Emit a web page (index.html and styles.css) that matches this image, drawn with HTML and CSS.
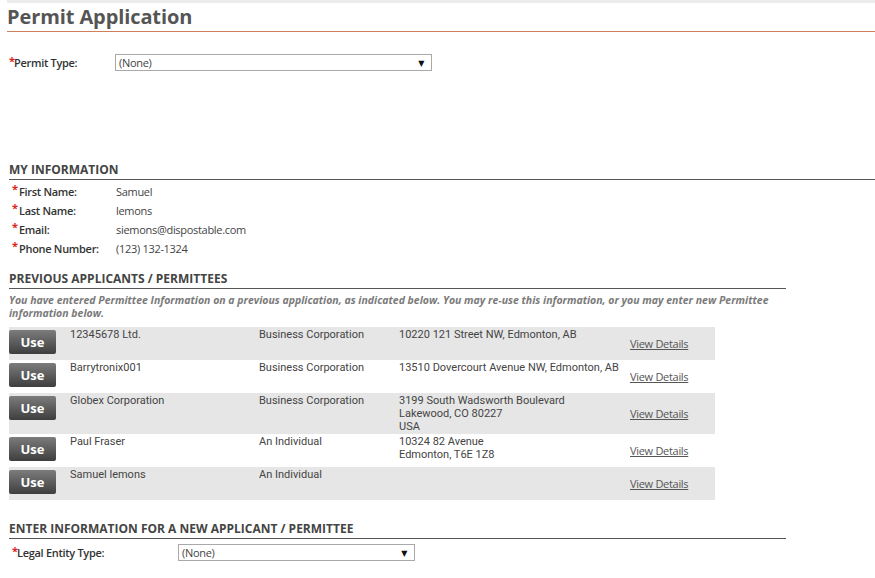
FILE: index.html
```html
<!DOCTYPE html>
<html>
<head>
<meta charset="utf-8">
<link rel="stylesheet" href="styles.css">
</head>
<body>
<div class="page">
  <div class="topbar"></div>
  <h1 class="title">Permit Application</h1>

  <div class="permit-row">
    <span class="req">*</span><span class="label permit-label">Permit Type:</span>
    <div class="select permit-select"><span>(None)</span><span class="arrow">&#9660;</span></div>
  </div>

  <h2 class="section-head full">MY INFORMATION</h2>
  <div class="info">
    <div class="info-row"><span class="req">*</span><span class="label info-label">First Name:</span><span class="value">Samuel</span></div>
    <div class="info-row"><span class="req">*</span><span class="label info-label">Last Name:</span><span class="value">lemons</span></div>
    <div class="info-row"><span class="req">*</span><span class="label info-label">Email:</span><span class="value">siemons@dispostable.com</span></div>
    <div class="info-row"><span class="req">*</span><span class="label info-label">Phone Number:</span><span class="value">(123) 132-1324</span></div>
  </div>

  <h2 class="section-head narrow prev-head">PREVIOUS APPLICANTS / PERMITTEES</h2>
  <p class="note">You have entered Permittee Information on a previous application, as indicated below. You may re-use this information, or you may enter new Permittee information below.</p>

  <div class="apps">
    <div class="app-row shade">
      <div class="c-btn"><button class="use">Use</button></div>
      <div class="c-txt">12345678 Ltd.</div>
      <div class="c-txt">Business Corporation</div>
      <div class="c-txt addr">10220 121 Street NW, Edmonton, AB</div>
      <div class="c-view"><a class="view">View Details</a></div>
    </div>
    <div class="app-row">
      <div class="c-btn"><button class="use">Use</button></div>
      <div class="c-txt">Barrytronix001</div>
      <div class="c-txt">Business Corporation</div>
      <div class="c-txt addr">13510 Dovercourt Avenue NW, Edmonton, AB</div>
      <div class="c-view"><a class="view">View Details</a></div>
    </div>
    <div class="app-row shade">
      <div class="c-btn"><button class="use">Use</button></div>
      <div class="c-txt">Globex Corporation</div>
      <div class="c-txt">Business Corporation</div>
      <div class="c-txt addr"><div class="line">3199 South Wadsworth Boulevard</div><div class="line">Lakewood, CO 80227</div><div class="line">USA</div></div>
      <div class="c-view"><a class="view">View Details</a></div>
    </div>
    <div class="app-row">
      <div class="c-btn"><button class="use">Use</button></div>
      <div class="c-txt">Paul Fraser</div>
      <div class="c-txt">An Individual</div>
      <div class="c-txt addr"><div class="line">10324 82 Avenue</div><div class="line">Edmonton, T6E 1Z8</div></div>
      <div class="c-view"><a class="view">View Details</a></div>
    </div>
    <div class="app-row shade">
      <div class="c-btn"><button class="use">Use</button></div>
      <div class="c-txt">Samuel lemons</div>
      <div class="c-txt">An Individual</div>
      <div class="c-txt addr"></div>
      <div class="c-view"><a class="view">View Details</a></div>
    </div>
  </div>

  <h2 class="section-head narrow new-head">ENTER INFORMATION FOR A NEW APPLICANT / PERMITTEE</h2>
  <div class="legal-row">
    <span class="req">*</span><span class="label legal-label">Legal Entity Type:</span>
    <div class="select legal-select"><span>(None)</span><span class="arrow">&#9660;</span></div>
  </div>
</div>
</body>
</html>
```

FILE: styles.css
```css
html, body {
  margin: 0;
  padding: 0;
  background: #ffffff;
}

body {
  font-family: "Open Sans", "DejaVu Sans", sans-serif;
  font-size: 11px;
  color: #444;
  letter-spacing: -0.3px;
}

.page {
  width: 875px;
}

.topbar {
  margin-left: 7px;
  height: 3px;
  background: #ececec;
}

.title {
  margin: 0 0 0 7px;
  font-size: 20px;
  font-weight: 700;
  line-height: 27px;
  padding-bottom: 1px;
  color: #555;
  border-bottom: 1px solid #cf7f5c;
  letter-spacing: -0.1px;
}

.req {
  color: #d22;
  font-size: 11px;
  font-weight: 700;
  line-height: 1;
  align-self: flex-start;
  margin-top: 1px;
  letter-spacing: 0;
}

.label {
  font-weight: 600;
  color: #333;
}

.permit-row {
  display: flex;
  align-items: center;
  margin: 22px 0 0 9px;
  height: 17px;
}

.permit-label {
  margin-left: -1px;
  width: 101px;
}

.select {
  box-sizing: border-box;
  height: 17px;
  border: 1px solid #a9a9a9;
  display: flex;
  align-items: center;
  justify-content: space-between;
  padding: 0 7px 0 3px;
  color: #444;
  font-size: 11px;
}

.arrow {
  font-size: 8px;
  color: #111;
}

.permit-select {
  width: 317px;
}

.section-head {
  margin: 0 0 0 9px;
  font-size: 12px;
  font-weight: 700;
  line-height: 16px;
  color: #444;
  border-bottom: 1px solid #555;
  padding-bottom: 1px;
  letter-spacing: 0;
}

.section-head.full {
  margin-top: 91px;
}

.section-head.narrow {
  width: 777px;
}

.info {
  margin: 2px 0 0 12px;
}

.info-row {
  display: flex;
  align-items: center;
  height: 19px;
}

.info-label {
  margin-left: 1px;
  width: 97px;
}

.value {
  color: #444;
}

.prev-head {
  margin-top: 13px;
}

.note {
  margin: 5px 0 0 9px;
  width: 777px;
  font-size: 10.5px;
  font-style: italic;
  font-weight: 700;
  line-height: 13px;
  color: #7a7a7a;
  letter-spacing: 0;
}

.apps {
  margin: 7px 0 0 9px;
  width: 706px;
}

.app-row {
  display: grid;
  grid-template-columns: 61px 189px 140px 231px 85px;
  min-height: 33px;
}

.app-row.shade {
  background: #e6e6e6;
}

.c-btn {
  padding-top: 3px;
}

.use {
  width: 47px;
  height: 24px;
  border: none;
  border-radius: 2px;
  background: linear-gradient(#7c7c7c, #3e3e3e);
  color: #fff;
  font-family: "Open Sans", "DejaVu Sans", sans-serif;
  font-size: 13px;
  font-weight: 700;
  padding: 0;
  display: block;
  letter-spacing: 0;
}

.c-txt {
  padding: 1px 0;
  font-family: Roboto, "Open Sans", sans-serif;
  line-height: 13px;
  letter-spacing: 0;
  color: #444;
}

.addr {
  white-space: nowrap;
}

.line {
  height: 13px;
  line-height: 13px;
}

.c-view {
  align-self: center;
}

.view {
  color: #555;
  text-decoration: underline;
}

.new-head {
  margin-top: 21px;
}

.legal-row {
  display: flex;
  align-items: center;
  margin: 5px 0 0 12px;
  height: 17px;
}

.legal-label {
  margin-left: -1px;
  width: 161px;
}

.legal-select {
  width: 237px;
}
```
